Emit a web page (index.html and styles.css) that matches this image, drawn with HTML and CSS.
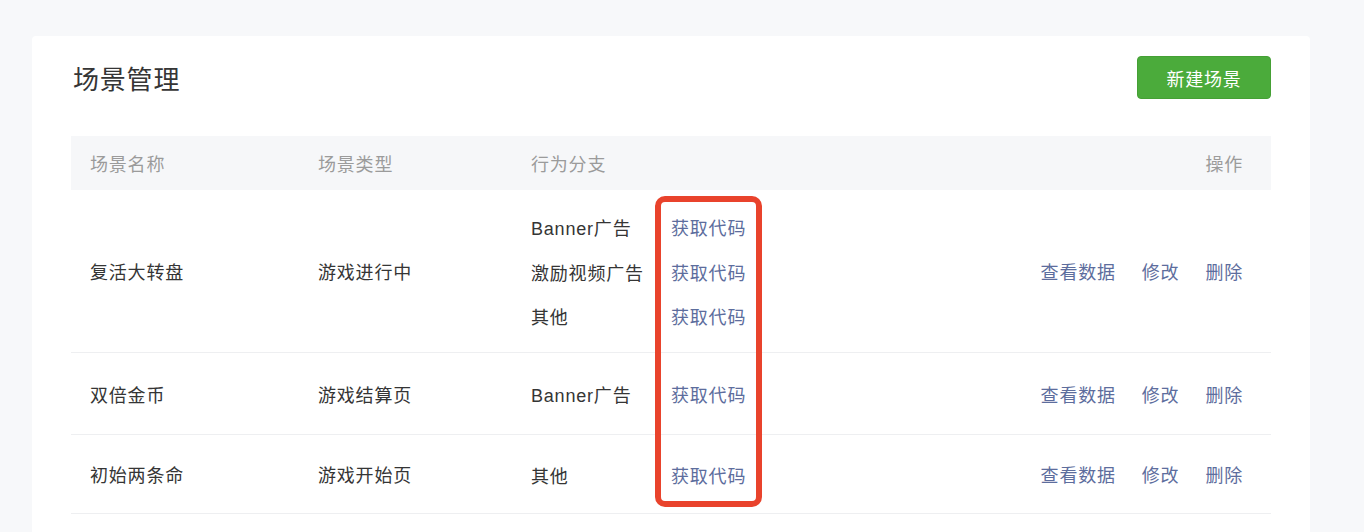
FILE: index.html
```html
<!DOCTYPE html>
<html lang="zh-CN">
<head>
  <meta charset="UTF-8" />
  <title>场景管理</title>
  <link rel="stylesheet" href="styles.css">
</head>
<body>
  <div class="card">
    <div class="card-head">
      <h2>场景管理</h2>
      <button class="btn-new">新建场景</button>
    </div>

    <div class="table">
      <div class="row head">
        <div>场景名称</div>
        <div>场景类型</div>
        <div>行为分支</div>
        <div></div>
        <div class="ops">操作</div>
      </div>

      <div class="row multi">
        <div>复活大转盘</div>
        <div>游戏进行中</div>
        <div class="branch">
          <span>Banner广告</span>
          <span>激励视频广告</span>
          <span>其他</span>
        </div>
        <div class="branch">
          <a href="#">获取代码</a>
          <a href="#">获取代码</a>
          <a href="#">获取代码</a>
        </div>
        <div class="ops"><a href="#">查看数据</a><a href="#">修改</a><a href="#">删除</a></div>
      </div>

      <div class="row">
        <div>双倍金币</div>
        <div>游戏结算页</div>
        <div class="branch"><span>Banner广告</span></div>
        <div class="branch"><a href="#">获取代码</a></div>
        <div class="ops"><a href="#">查看数据</a><a href="#">修改</a><a href="#">删除</a></div>
      </div>

      <div class="row last">
        <div>初始两条命</div>
        <div>游戏开始页</div>
        <div class="branch"><span>其他</span></div>
        <div class="branch"><a href="#">获取代码</a></div>
        <div class="ops"><a href="#">查看数据</a><a href="#">修改</a><a href="#">删除</a></div>
      </div>
    </div>

    <!-- annotation box over the code links -->
    <div class="mark"></div>
  </div>
</body>
</html>
```

FILE: styles.css
```css
body {
  margin: 0;
  background: #f7f8fa;
  font-family: "Liberation Sans", "Noto Sans CJK SC", sans-serif;
  color: #353535;
  font-size: 18px;
  letter-spacing: 0.8px;
  height: 532px;
  overflow: hidden;
}
.card {
  position: relative;
  width: 1278px;
  margin: 36px 0 0 32px;
  min-height: 520px;
  background: #fff;
  border-radius: 4px;
  box-sizing: border-box;
  padding: 20px 39px 0 39px;
}
.card-head {
  display: flex;
  justify-content: space-between;
  align-items: center;
  height: 43px;
  margin-bottom: 37px;
}
.card-head h2 {
  margin: 0 0 0 2px;
  font-size: 26px;
  font-weight: normal;
  color: #353535;
}
.btn-new {
  width: 134px;
  height: 43px;
  background: #4bab3b;
  border: 1px solid #45a035;
  border-radius: 4px;
  color: #fff;
  font-family: inherit;
  font-size: 18px;
  letter-spacing: 0.8px;
  cursor: pointer;
}
.row {
  display: grid;
  grid-template-columns: 228px 213px 140px 1fr auto;
  align-items: center;
  min-height: 80px;
  padding: 1px 28px 0 19px;
  border-bottom: 1px solid #eeeff1;
}
.row.multi {
  padding-top: 14px;
  padding-bottom: 14px;
}
.row.last {
  min-height: 77px;
}
.row.head {
  min-height: 54px;
  padding-top: 0;
  background: #f6f7f9;
  color: #9b9b9b;
  border-bottom: none;
}
.branch {
  display: flex;
  flex-direction: column;
  margin: 3px 0 -3px;
}
.branch span, .branch a {
  line-height: 44.5px;
}
a {
  color: #5d6d9d;
  text-decoration: none;
}
.ops {
  display: flex;
  gap: 26px;
  justify-content: flex-end;
}
.mark {
  position: absolute;
  left: 623px;
  top: 160px;
  width: 107px;
  height: 311px;
  box-sizing: border-box;
  border: 6px solid #e9432c;
  border-radius: 10px;
}
```
